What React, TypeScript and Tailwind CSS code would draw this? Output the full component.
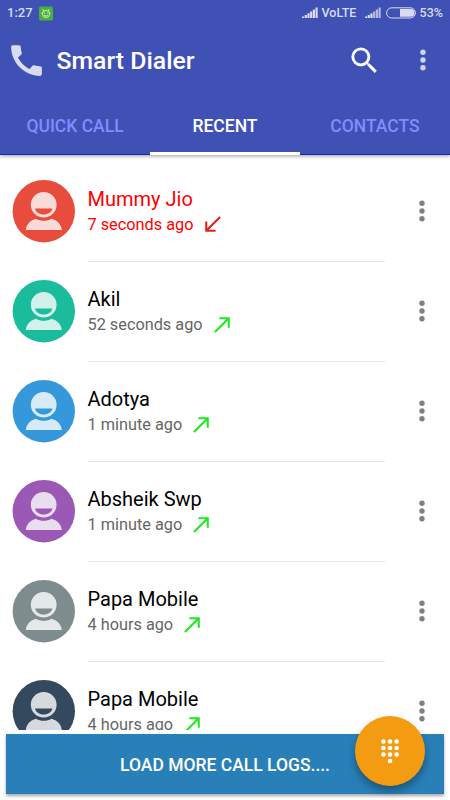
import clsx from 'clsx';

const calls = [
  {
    id: 1,
    name: 'Mummy Jio',
    time: '7 seconds ago',
    missed: true,
    color: 'text-[#e84c3d]',
  },
  { id: 2, name: 'Akil', time: '52 seconds ago', color: 'text-[#1bbc9b]' },
  { id: 3, name: 'Adotya', time: '1 minute ago', color: 'text-[#3598db]' },
  { id: 4, name: 'Absheik Swp', time: '1 minute ago', color: 'text-[#9b58b5]' },
  { id: 5, name: 'Papa Mobile', time: '4 hours ago', color: 'text-[#7e8c8d]' },
  { id: 6, name: 'Papa Mobile', time: '4 hours ago', color: 'text-[#34495e]' },
];

const Signal = ({ dim = false }: { dim?: boolean }) => (
  <svg width="16" height="12" viewBox="0 0 16 12" fill="#d9dcf0">
    <rect x="0" y="9.5" width="2.2" height="1.5" />
    <rect x="2.7" y="8" width="2.2" height="3" />
    <rect x="5.4" y="6.3" width="2.2" height="4.7" />
    <rect x="8.1" y="4.5" width="2.2" height="6.5" opacity={dim ? 0.75 : 1} />
    <rect x="10.8" y="2.5" width="2.2" height="8.5" opacity={dim ? 0.75 : 1} />
    <rect x="13.5" y="0.5" width="2.2" height="10.5" opacity={dim ? 0.75 : 1} />
  </svg>
);

const Battery = () => (
  <svg width="30" height="12" viewBox="0 0 30 12">
    <rect
      x="0.6"
      y="0.8"
      width="28.8"
      height="10.2"
      rx="5.1"
      fill="none"
      stroke="#d9dcf0"
    />
    <path d="M14 2.1h10.7a3.8 3.8 0 0 1 0 7.6H14z" fill="#d9dcf0" />
  </svg>
);

const Dots = ({ className }: { className: string }) => (
  <svg width="8" height="24" viewBox="0 0 8 24" className={className}>
    <circle cx="4" cy="4.2" r="2.7" fill="currentColor" />
    <circle cx="4" cy="12" r="2.7" fill="currentColor" />
    <circle cx="4" cy="19.8" r="2.7" fill="currentColor" />
  </svg>
);

const Avatar = ({ color }: { color: string }) => (
  <svg width="63" height="63" viewBox="0 0 63 63" className={color}>
    <circle cx="31.8" cy="31.2" r="31.2" fill="currentColor" />
    <g fill="#fff" fillOpacity="0.8">
      <path
        fillRule="evenodd"
        d="M31.7 12a12.9 12.8 0 1 0 0 25.6a12.9 12.8 0 1 0 0-25.6zM23 28.5h17.4c-.8 3.6-4.2 6-8.7 6s-7.9-2.4-8.7-6z"
      />
      <path d="M13.8 50c.5-5.4 4.5-9.8 10.2-11.2c4.6 2.7 10.8 2.7 15.4 0c5.7 1.4 9.9 5.8 10.4 11.2z" />
    </g>
  </svg>
);

const CallArrow = ({ missed }: { missed?: boolean }) => (
  <svg
    width="25"
    height="25"
    viewBox="0 0 24 24"
    className={missed ? 'text-[#e02516]' : 'text-[#22e822]'}
  >
    <path
      fill="currentColor"
      d={
        missed
          ? 'M20 5.41L18.59 4 7 15.59V9H5v10h10v-2H8.41z'
          : 'M9 5v2h6.59L4 18.59 5.41 20 17 8.41V15h2V5z'
      }
    />
  </svg>
);

const App = () => {
  return (
    <div className="relative flex h-[800px] w-[450px] flex-col overflow-hidden bg-white font-['Roboto',sans-serif]">
      <header className="z-10 flex h-[155px] shrink-0 flex-col border-b border-[#0a2cae] bg-[#3f51b5] shadow-[0_1px_4px_rgba(0,0,0,0.4)]">
        {/* status bar */}
        <div className="flex h-[25px] shrink-0 items-center pt-px pr-2 pl-[7px] text-[12.5px] font-medium text-[#d9dcf0]">
          <span className="w-[32px] text-[13px]">1:27</span>
          <svg width="14" height="15" viewBox="0 0 15 15">
            <rect width="15" height="15" rx="2" fill="#4caf3c" />
            <g fill="none" stroke="#e4f7df" strokeWidth="0.9">
              <circle cx="7.5" cy="8" r="3.8" />
              <path d="M5 5L4 2.8M10 5l1-2.2M3.7 7H2.5M11.3 7h1.2M5.5 9.5q2 1.5 4 0M5.5 7h1M8.5 7h1" />
            </g>
          </svg>
          <div className="ml-auto flex items-center">
            <Signal />
            <span className="ml-[4px] w-[43px]">VoLTE</span>
            <Signal dim />
            <span className="mr-[4px] ml-[5px]">
              <Battery />
            </span>
            <span className="-mr-px">53%</span>
          </div>
        </div>

        {/* toolbar */}
        <div className="flex h-[70px] shrink-0 items-center pl-[6px]">
          <svg width="41" height="41" viewBox="0 0 24 24" fill="#d9dcf0">
            <path d="M20.01 15.38c-1.23 0-2.42-.2-3.53-.56a.977.977 0 0 0-1.01.24l-1.57 1.97c-2.83-1.35-5.48-3.9-6.89-6.83l1.95-1.66c.27-.28.35-.67.24-1.02-.37-1.11-.56-2.3-.56-3.53 0-.54-.45-.99-.99-.99H4.19C3.65 3 3 3.24 3 3.99 3 13.28 10.73 21 20.01 21c.71 0 .99-.63.99-1.18v-3.45c0-.54-.45-.99-.99-.99z" />
          </svg>
          <h1 className="ml-[9.5px] pt-[2px] text-[24.8px] font-medium text-white">
            Smart Dialer
          </h1>
          <svg
            width="35"
            height="35"
            viewBox="0 0 24 24"
            className="mr-[36.5px] ml-auto"
            fill="#fff"
          >
            <path d="M15.5 14h-.79l-.28-.27A6.471 6.471 0 0 0 16 9.5 6.5 6.5 0 1 0 9.5 16c1.61 0 3.09-.59 4.23-1.57l.27.28v.79l5 4.99L20.49 19l-4.99-5zm-6 0C7.01 14 5 11.99 5 9.5S7.01 5 9.5 5 14 7.01 14 9.5 11.99 14 9.5 14z" />
          </svg>
          <Dots className="mr-[23.5px] text-[#cfd3ed]" />
        </div>

        {/* tabs */}
        <div className="grid h-[59px] shrink-0 grid-cols-3 text-center text-[17.5px] leading-[30px] font-medium text-[#7f8dff]">
          <div className="pt-4">QUICK CALL</div>
          <div className="-mb-px border-b-[3px] border-white pt-4 text-white">
            RECENT
          </div>
          <div className="pt-4">CONTACTS</div>
        </div>
      </header>

      <main className="h-[575px] shrink-0 overflow-hidden pt-[7px]">
        {calls.map(call => (
          <div key={call.id} className="flex h-[100px] pl-3">
            <div className="pt-[18px]">
              <Avatar color={call.color} />
            </div>
            <div
              className={clsx(
                'ml-[12.5px] w-[297.5px] border-b border-[#e6e6e6] pt-[25px]',
                call.missed ? 'text-[#ff0000]' : 'text-black'
              )}
            >
              <div className="text-[20px] leading-[25px]">{call.name}</div>
              <div
                className={clsx(
                  'flex h-[25px] items-center gap-[7px] text-[16.3px]',
                  !call.missed && 'text-[#666]'
                )}
              >
                <span className="pt-px">{call.time}</span>
                <CallArrow missed={call.missed} />
              </div>
            </div>
            <Dots className="mt-[37px] ml-[33px] text-[#808080]" />
          </div>
        ))}
      </main>

      <button className="mx-[6px] mt-1 h-[60px] shrink-0 bg-[#2980b9] pt-[2px] text-[17.5px] font-medium text-white shadow-[0_2px_3px_rgba(0,0,0,0.35)]">
        LOAD MORE CALL LOGS....
      </button>

      <button className="absolute top-[716px] left-[355px] flex h-[70px] w-[70px] items-center justify-center rounded-full bg-[#f39c12] shadow-[0_5px_8px_rgba(0,0,0,0.35)]">
        <svg width="20" height="26" viewBox="0 0 20 26" fill="#fff">
          <circle cx="3.4" cy="3.5" r="2.3" />
          <circle cx="10" cy="3.5" r="2.3" />
          <circle cx="16.6" cy="3.5" r="2.3" />
          <circle cx="3.4" cy="10" r="2.3" />
          <circle cx="10" cy="10" r="2.3" />
          <circle cx="16.6" cy="10" r="2.3" />
          <circle cx="3.4" cy="16.5" r="2.3" />
          <circle cx="10" cy="16.5" r="2.3" />
          <circle cx="16.6" cy="16.5" r="2.3" />
          <circle cx="10" cy="23" r="2.3" />
        </svg>
      </button>
    </div>
  );
};

export default App;
